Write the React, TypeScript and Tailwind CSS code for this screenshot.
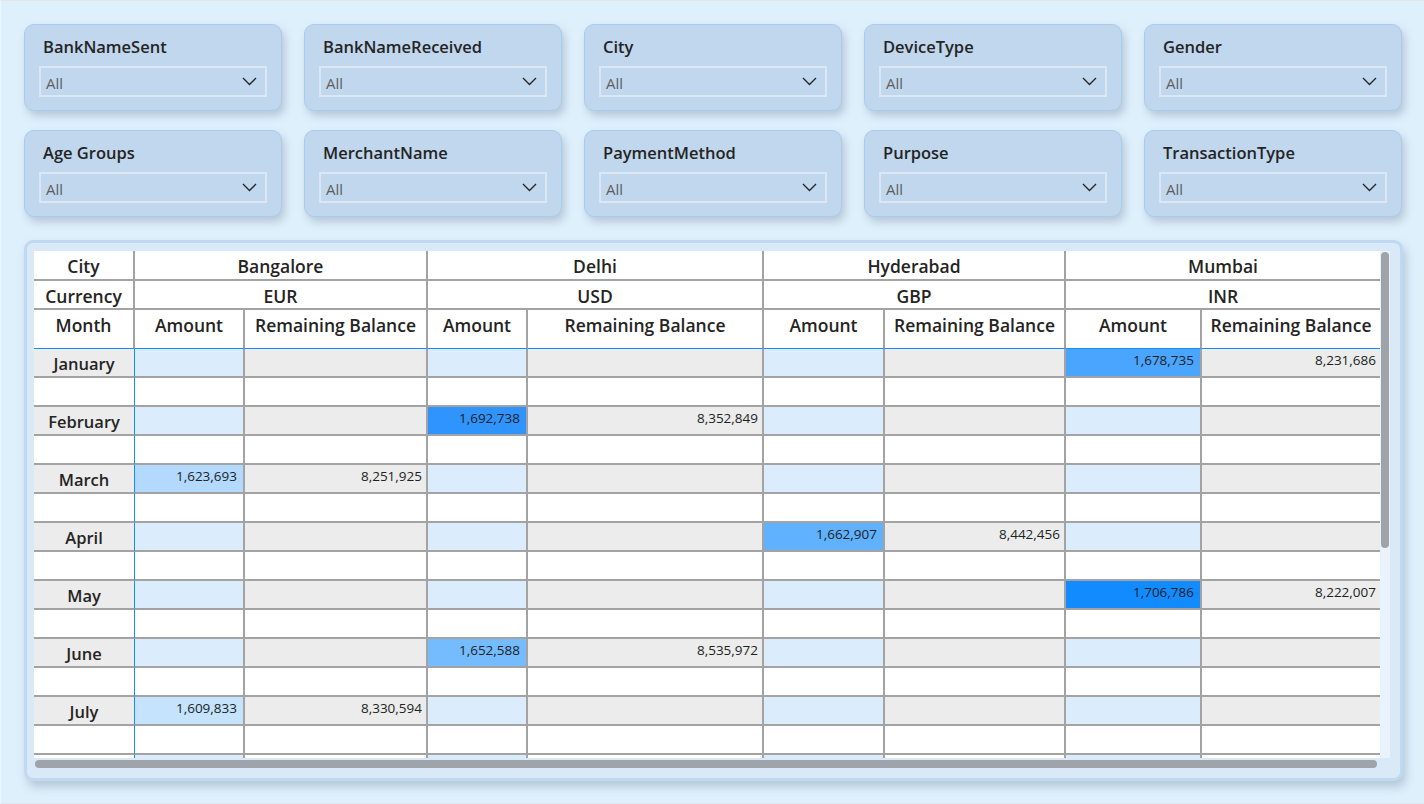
import React from "react";

const slicerRows = [
  ["BankNameSent", "BankNameReceived", "City", "DeviceType", "Gender"],
  ["Age Groups", "MerchantName", "PaymentMethod", "Purpose", "TransactionType"],
];

const cities = [
  { name: "Bangalore", cur: "EUR" },
  { name: "Delhi", cur: "USD" },
  { name: "Hyderabad", cur: "GBP" },
  { name: "Mumbai", cur: "INR" },
];

const months = [
  { m: "January", city: "Mumbai", amt: "1,678,735", rb: "8,231,686", color: "bg-[#4aa5ff]" },
  { m: "February", city: "Delhi", amt: "1,692,738", rb: "8,352,849", color: "bg-[#2f94fd]" },
  { m: "March", city: "Bangalore", amt: "1,623,693", rb: "8,251,925", color: "bg-[#b3d9fe]" },
  { m: "April", city: "Hyderabad", amt: "1,662,907", rb: "8,442,456", color: "bg-[#60b1fe]" },
  { m: "May", city: "Mumbai", amt: "1,706,786", rb: "8,222,007", color: "bg-[#118bff]" },
  { m: "June", city: "Delhi", amt: "1,652,588", rb: "8,535,972", color: "bg-[#75bcfe]" },
  { m: "July", city: "Bangalore", amt: "1,609,833", rb: "8,330,594", color: "bg-[#c6e3fe]" },
];

const line = "border-[#a3a3a3]";

function Chevron() {
  return (
    <svg width="15" height="9" viewBox="0 0 15 9" fill="none">
      <polyline points="1,1 7.5,7.5 14,1" stroke="#252423" strokeWidth="1.3" />
    </svg>
  );
}

function Slicer({ title }: { title: string }) {
  return (
    <div className="w-[258px] h-[87px] rounded-[10px] border border-[#a8ccf0] bg-[#c0d7ee] shadow-[3px_5px_9px_rgba(60,80,100,0.25)] pt-[10px] px-[14px]">
      <div className="pl-[4px] text-[16.5px] leading-[24px] font-semibold text-[#252423]">{title}</div>
      <div className="mt-[7px] h-[31px] border-2 border-[#dbe7f3] flex items-center justify-between pl-[5px] pr-[8px]">
        <span className="text-[15px] text-[#605e5c] pt-[3px]">All</span>
        <Chevron />
      </div>
    </div>
  );
}

function Table() {
  const head = "text-[17.5px] leading-[22px] font-semibold text-[#252423] text-center pt-[4px] bg-white";
  return (
    <div className="grid grid-cols-[101px_110px_183px_100px_236px_121px_181px_136px_178px]">
      {/* header row 1 */}
      <div className={`h-[30px] border-r-2 border-b-2 ${line} ${head}`}>City</div>
      {cities.map((c, i) => (
        <div key={c.name} className={`col-span-2 h-[30px] border-b-2 ${i < 3 ? "border-r-2" : ""} ${line} ${head}`}>
          {c.name}
        </div>
      ))}
      {/* header row 2 */}
      <div className={`h-[29px] border-r-2 border-b-2 ${line} ${head} pt-[2px]`}>Currency</div>
      {cities.map((c, i) => (
        <div key={c.cur} className={`col-span-2 h-[29px] border-b-2 ${i < 3 ? "border-r-2" : ""} ${line} ${head} pt-[2px]`}>
          {c.cur}
        </div>
      ))}
      {/* header row 3 */}
      <div className={`h-[39px] border-r-2 ${line} border-b border-b-[#118dff] ${head}`}>Month</div>
      {cities.map((c, i) => (
        <React.Fragment key={c.name + "h"}>
          <div className={`h-[39px] border-r-2 ${line} border-b border-b-[#118dff] ${head}`}>Amount</div>
          <div className={`h-[39px] ${i < 3 ? "border-r-2" : ""} ${line} border-b border-b-[#118dff] ${head}`}>Remaining Balance</div>
        </React.Fragment>
      ))}
      {/* body */}
      {months.map((r) => (
        <React.Fragment key={r.m}>
          <div className={`h-[29px] border-b-2 ${line} border-r border-r-[#118dff] bg-[#ececec] text-center text-[16.5px] leading-[20px] font-semibold text-[#252423] pt-[5px]`}>
            {r.m}
          </div>
          {cities.map((c, i) => {
            const hit = c.name === r.city;
            return (
              <React.Fragment key={c.name}>
                <div className={`h-[29px] border-b-2 border-r-2 ${line} ${hit ? r.color : "bg-[#dbecfd]"} text-right pr-[6px] pt-[3px] text-[13.5px] leading-[16px] text-[#201f1e]`}>
                  {hit ? r.amt : ""}
                </div>
                <div className={`h-[29px] border-b-2 ${i < 3 ? "border-r-2" : ""} ${line} bg-[#ececec] text-right pr-[4px] pt-[3px] text-[13.5px] leading-[16px] text-[#201f1e]`}>
                  {hit ? r.rb : ""}
                </div>
              </React.Fragment>
            );
          })}
          <div className={`h-[29px] border-b-2 ${line} border-r border-r-[#118dff] bg-white`} />
          {cities.map((c, i) => (
            <React.Fragment key={c.name + "b"}>
              <div className={`h-[29px] border-b-2 border-r-2 ${line} bg-white`} />
              <div className={`h-[29px] border-b-2 ${i < 3 ? "border-r-2" : ""} ${line} bg-white`} />
            </React.Fragment>
          ))}
        </React.Fragment>
      ))}
      <div className="h-[29px] border-r border-r-[#118dff] bg-white" />
      {cities.map((c, i) => (
        <React.Fragment key={c.name + "x"}>
          <div className={`h-[29px] border-r-2 ${line} bg-[#dbecfd]`} />
          <div className={`h-[29px] ${i < 3 ? "border-r-2" : ""} ${line} bg-white`} />
        </React.Fragment>
      ))}
    </div>
  );
}

export default function App() {
  return (
    <div className="w-[1424px] h-[804px] overflow-hidden bg-[#dff0fd] border-t border-b border-t-[#e3e6e9] border-b-[#e3e6e9] border-l border-l-[#eef6fd] font-['Open_Sans',sans-serif]">
      <div className="pl-[23px] pt-[23px] flex flex-col gap-[19px]">
        {slicerRows.map((row, i) => (
          <div key={i} className="flex gap-[22px]">
            {row.map((t) => (
              <Slicer key={t} title={t} />
            ))}
          </div>
        ))}
      </div>

      <div className="ml-[23px] mt-[23px] w-[1379px] h-[541px] rounded-[9px] border-[3px] border-[#bfd9f3] bg-[#dae9f8] shadow-[3px_6px_10px_rgba(60,80,100,0.25)] pl-[7px] pt-[8px]">
        <div className="flex">
          <div className="w-[1346px] h-[507px] overflow-hidden">
            <Table />
          </div>
          <div className="w-[10px] h-[507px] bg-[#eaf3fc] flex justify-center pt-[1px]">
            <div className="w-[8px] h-[296px] rounded-full bg-[#9ea4aa]" />
          </div>
        </div>
        <div className="mt-[2px] ml-[1px] w-[1342px] h-[8px] rounded-full bg-[#9ea4aa]" />
      </div>
    </div>
  );
}
